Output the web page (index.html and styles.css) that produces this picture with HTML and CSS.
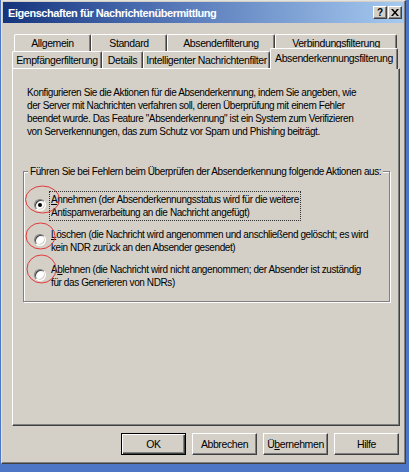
FILE: index.html
```html
<!DOCTYPE html>
<html lang="de">
<head>
<meta charset="utf-8">
<title>Eigenschaften für Nachrichtenübermittlung</title>
<link rel="stylesheet" href="styles.css">
</head>
<body>
<div class="window">
  <div class="titlebar">
    <span class="title">Eigenschaften für Nachrichtenübermittlung</span>
    <div class="caption-buttons">
      <span class="cap-btn">?</span>
      <span class="cap-btn cap-close">
        <svg width="8" height="7" viewBox="0 0 8 7"><path d="M0 0h2l2 2.5L6 0h2L5 3.5 8 7H6L4 4.5 2 7H0l3-3.5z" fill="#000"/></svg>
      </span>
    </div>
  </div>

  <div class="tabs">
    <div class="tab-row row-back">
      <div class="tab t-allgemein">Allgemein</div>
      <div class="tab t-standard">Standard</div>
      <div class="tab t-absf">Absenderfilterung</div>
      <div class="tab t-verb">Verbindungsfilterung</div>
    </div>
    <div class="tab-row row-front">
      <div class="tab t-empf">Empfängerfilterung</div>
      <div class="tab t-details">Details</div>
      <div class="tab t-intel">Intelligenter Nachrichtenfilter</div>
      <div class="tab tab-active t-kenn">Absenderkennungsfilterung</div>
    </div>
  </div>

  <div class="panel">
    <p class="desc">Konfigurieren Sie die Aktionen für die Absenderkennung, indem Sie angeben, wie<br>der Server mit Nachrichten verfahren soll, deren Überprüfung mit einem Fehler<br>beendet wurde. Das Feature "Absenderkennung" ist ein System zum Verifizieren<br>von Serverkennungen, das zum Schutz vor Spam und Phishing beiträgt.</p>

    <fieldset class="group">
      <legend>Führen Sie bei Fehlern beim Überprüfen der Absenderkennung folgende Aktionen aus:</legend>
      <div class="options">
        <div class="option">
          <span class="radio checked"></span>
          <span class="label focus"><u>A</u>nnehmen (der Absenderkennungsstatus wird für die weitere<br>Antispamverarbeitung an die Nachricht angefügt)</span>
        </div>
        <div class="option">
          <span class="radio"></span>
          <span class="label"><u>L</u>öschen (die Nachricht wird angenommen und anschließend gelöscht; es wird<br>kein NDR zurück an den Absender gesendet)</span>
        </div>
        <div class="option">
          <span class="radio"></span>
          <span class="label">A<u>b</u>lehnen (die Nachricht wird nicht angenommen; der Absender ist zuständig<br>für das Generieren von NDRs)</span>
        </div>
      </div>
    </fieldset>
  </div>

  <div class="buttons">
    <button class="btn btn-default">OK</button>
    <button class="btn">Abbrechen</button>
    <button class="btn">Ü<u>b</u>ernehmen</button>
    <button class="btn">Hilfe</button>
  </div>
</div>

<svg class="annotations" width="409" height="472" viewBox="0 0 409 472">
  <ellipse cx="42.5" cy="199.5" rx="17" ry="13.5" fill="none" stroke="#e23a3a" stroke-width="1"/>
  <ellipse cx="40.5" cy="236" rx="14.5" ry="13" fill="none" stroke="#e23a3a" stroke-width="1"/>
  <ellipse cx="41.5" cy="269" rx="14.5" ry="14" fill="none" stroke="#e23a3a" stroke-width="1"/>
  <line x1="277" y1="65.5" x2="391" y2="65.5" stroke="#e23a3a" stroke-width="1.5"/>
  <line x1="277" y1="68.5" x2="393" y2="68.5" stroke="#a6e4ea" stroke-width="1"/>
</svg>
</body>
</html>
```

FILE: styles.css
```css
* { box-sizing: border-box; }

html, body {
  margin: 0;
  padding: 0;
  width: 409px;
  height: 472px;
  overflow: hidden;
}

body {
  background: #4d76c6;
  font-family: "Liberation Sans", Arial, sans-serif;
  font-size: 10px;
  letter-spacing: -0.4px;
  color: #000;
  position: relative;
}

.window {
  margin-left: 1px;
  width: 405px;
  height: 464px;
  background: #d4d0c8;
  border: 1px solid;
  border-color: #e4e2dc #404040 #404040 #e4e2dc;
  box-shadow: inset -1px -1px 0 #808080;
  padding: 1px;
  display: flex;
  flex-direction: column;
}

/* Title bar */
.titlebar {
  height: 21px;
  background: linear-gradient(to right, #14347c 0%, #4a6cb0 35%, #a6caf0 100%);
  display: flex;
  align-items: center;
  justify-content: space-between;
  padding: 0 2px 0 5px;
  flex: none;
}

.title {
  color: #fff;
  font-weight: bold;
  font-size: 11px;
  letter-spacing: -0.45px;
}

.caption-buttons {
  display: flex;
  gap: 1px;
}

.cap-btn {
  width: 14px;
  height: 13px;
  background: #d4d0c8;
  border: 1px solid;
  border-color: #fff #404040 #404040 #fff;
  box-shadow: inset -1px -1px 0 #808080;
  display: flex;
  align-items: center;
  justify-content: center;
  font-weight: bold;
  font-size: 10px;
  letter-spacing: 0;
  line-height: 1;
}

/* Tabs */
.tabs {
  margin-top: 11px;
  flex: none;
}

.tab-row {
  display: flex;
  height: 17px;
  align-items: flex-end;
}

.row-back { padding-left: 11px; }
.row-front { padding-left: 9px; }

.tab {
  height: 17px;
  background: #d4d0c8;
  border: 1px solid;
  border-bottom: none;
  border-color: #fff #404040 #fff #fff;
  box-shadow: inset -1px 0 0 #808080;
  border-radius: 2px 2px 0 0;
  display: flex;
  align-items: center;
  justify-content: center;
  white-space: nowrap;
  flex: none;
  line-height: 13px;
  padding-top: 1px;
  font-size: 10.5px;
}

.t-allgemein { width: 77px; }
.t-standard { width: 76px; }
.t-absf { width: 108px; }
.t-verb { width: 122px; }
.t-empf { width: 90px; }
.t-details { width: 41px; }
.t-intel { width: 127px; }

.tab-active {
  width: 128px;
  height: 21px;
  margin-bottom: -1px;
  position: relative;
  z-index: 1;
  padding-top: 0;
  padding-bottom: 2px;
}

/* Panel */
.panel {
  margin-left: 9px;
  width: 388px;
  height: 358px;
  border: 1px solid;
  border-color: #fff #404040 #404040 #fff;
  box-shadow: inset -1px -1px 0 #808080;
  padding: 17px 8px 0 10px;
  flex: none;
}

.desc {
  margin: 0;
  padding-left: 4px;
  line-height: 13px;
  white-space: nowrap;
}

.group {
  margin: 27px 0 0 0;
  width: 367px;
  border: 1px solid #808080;
  box-shadow: inset 1px 1px 0 #fff, 1px 1px 0 #fff;
  padding: 0 0 10px 0;
  min-width: 0;
}

.group legend {
  margin-left: 4px;
  padding: 0 2px;
  line-height: 13px;
  white-space: nowrap;
  background: #d4d0c8;
}

.options {
  display: flex;
  flex-direction: column;
  gap: 5px;
  padding: 13px 0 0 10px;
}

.option {
  display: flex;
  align-items: flex-start;
  gap: 3px;
}

.radio {
  width: 12px;
  height: 12px;
  margin-top: 8px;
  border-radius: 50%;
  background: #fff;
  border: 1px solid;
  border-color: #808080 #fff #fff #808080;
  box-shadow: inset 1px 1px 0 #404040, inset -1px -1px 0 #d4d0c8;
  position: relative;
  flex: none;
}

.radio.checked::after {
  content: "";
  position: absolute;
  left: 3px;
  top: 3px;
  width: 4px;
  height: 4px;
  border-radius: 50%;
  background: #000;
}

.label {
  line-height: 13px;
  padding: 1px;
  border: 1px dotted transparent;
  white-space: nowrap;
}

.label.focus {
  border-color: #333;
}

/* Buttons */
.buttons {
  display: flex;
  justify-content: flex-end;
  gap: 6px;
  margin-top: 7px;
  padding-right: 5px;
  flex: none;
}

.btn {
  width: 65px;
  height: 22px;
  background: #d4d0c8;
  border: 1px solid;
  border-color: #fff #404040 #404040 #fff;
  box-shadow: inset -1px -1px 0 #808080;
  font-family: "Liberation Sans", Arial, sans-serif;
  font-size: 10.5px;
  letter-spacing: -0.4px;
  color: #000;
  padding: 0;
  margin: 0;
}

.btn-default {
  border: 1px solid #000;
  box-shadow: inset 1px 1px 0 #fff, inset -1px -1px 0 #404040, inset -2px -2px 0 #808080;
}

/* Annotation overlay */
.annotations {
  position: absolute;
  left: 0;
  top: 0;
  pointer-events: none;
}
```
